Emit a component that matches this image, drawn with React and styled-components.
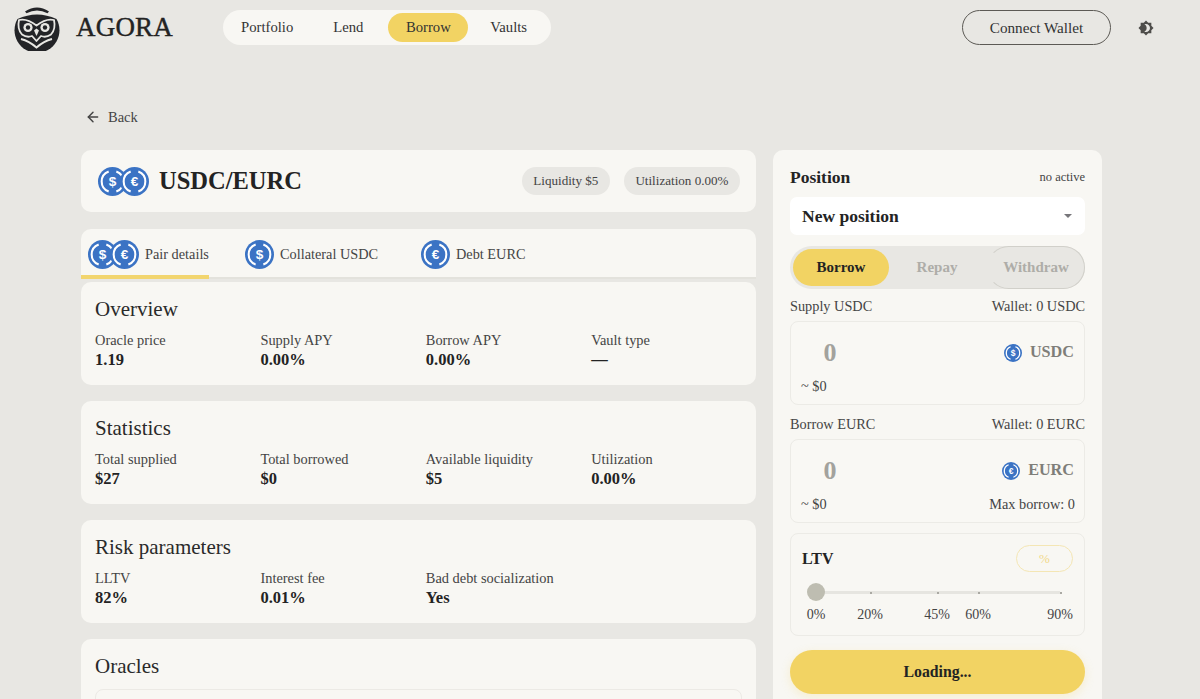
import React from 'react';
import styled, { createGlobalStyle } from 'styled-components';
import { MdBrightness4 } from 'react-icons/md';
import { ArrowLeft } from 'lucide-react';

const GlobalStyle = createGlobalStyle`
html, body {
    margin: 0;
    height: 699px;
    overflow: hidden;
    background: #e8e7e3;
    color: #232323;
    font-family: "Liberation Serif", serif;
}
* { box-sizing: border-box; }
`

const Coin = ({ symbol, size = 34 }) => (
    <CoinSvg viewBox="0 0 34 34" $size={size}>
        <circle cx="17" cy="17" r="17" fill="#3b73c4" />
        <path d="M12.5 5.2 A12.6 12.6 0 0 0 12.5 28.8" fill="none" stroke="#fff" strokeWidth="2.4" />
        <path d="M21.5 5.2 A12.6 12.6 0 0 1 21.5 28.8" fill="none" stroke="#fff" strokeWidth="2.4" />
        <text x="17" y="22.5" textAnchor="middle" fontSize="16" fontWeight="700" fill="#fff" fontFamily="Liberation Sans, sans-serif">{symbol}</text>
    </CoinSvg>
)

const PairCoins = () => (
    <PairBox>
        <Coin symbol="$" size={29} />
        <Coin symbol="€" size={29} />
    </PairBox>
)

const Owl = () => (
    <svg width="46" height="46" viewBox="0 0 46 46">
        <path d="M11 6.5 Q23 -1.5 35 6.5 L33.5 8.2 Q23 3 12.5 8.2 Z" fill="#232427" />
        <path d="M3.5 14 Q23 5 42.5 14 A22.5 22.5 0 1 1 3.5 14 Z" fill="#232427" />
        <path d="M5 15 Q13 13 22.5 20.5 Q32 13 40 15 Q42 24 37 29.5 Q32 33 27 31 L22.5 36 L18 31 Q13 33 8 29.5 Q3 24 5 15 Z" fill="#232427" stroke="#e8e7e3" strokeWidth="1.8" strokeLinejoin="round" />
        <circle cx="14" cy="22.5" r="4.6" fill="#e8e7e3" />
        <circle cx="31" cy="22.5" r="4.6" fill="#e8e7e3" />
        <circle cx="14" cy="22.5" r="2.2" fill="#232427" />
        <circle cx="31" cy="22.5" r="2.2" fill="#232427" />
        <path d="M20 25.5 L22.5 23.5 L25 25.5 L22.5 31 Z" fill="#e8e7e3" />
        <path d="M7 34 Q15 36 22.5 42.5 Q30 36 38 34" fill="none" stroke="#e8e7e3" strokeWidth="2" />
    </svg>
)

const overview = [
    ['Oracle price', '1.19'],
    ['Supply APY', '0.00%'],
    ['Borrow APY', '0.00%'],
    ['Vault type', '—'],
]
const statistics = [
    ['Total supplied', '$27'],
    ['Total borrowed', '$0'],
    ['Available liquidity', '$5'],
    ['Utilization', '0.00%'],
]
const risk = [
    ['LLTV', '82%'],
    ['Interest fee', '0.01%'],
    ['Bad debt socialization', 'Yes'],
]
const sections = [
    ['Overview', overview],
    ['Statistics', statistics],
    ['Risk parameters', risk],
]
const ticks = [
    ['0%', 0],
    ['20%', 54],
    ['45%', 121],
    ['60%', 162],
    ['90%', 244],
]

const App = () => {
    return (
        <>
            <GlobalStyle />
            <Header>
                <Brand>
                    <Owl />
                    <BrandName>AGORA</BrandName>
                </Brand>
                <Nav>
                    <NavItem>Portfolio</NavItem>
                    <NavItem>Lend</NavItem>
                    <NavItem $active>Borrow</NavItem>
                    <NavItem>Vaults</NavItem>
                </Nav>
                <WalletButton>Connect Wallet</WalletButton>
                <ThemeToggle><MdBrightness4 size={16} /></ThemeToggle>
            </Header>
            <Page>
                <BackLink><ArrowLeft size={16} strokeWidth={2.2} />Back</BackLink>
                <Columns>
                    <MainColumn>
                        <TitleCard>
                            <TitleLeft>
                                <PairCoins />
                                <PairTitle>USDC/EURC</PairTitle>
                            </TitleLeft>
                            <Badges>
                                <Badge>Liquidity $5</Badge>
                                <Badge>Utilization 0.00%</Badge>
                            </Badges>
                        </TitleCard>
                        <TabsCard>
                            <Tab $active $width={128}><PairCoins />Pair details</Tab>
                            <Tab $width={176}><Coin symbol="$" size={29} />Collateral USDC</Tab>
                            <Tab $width={140}><Coin symbol="€" size={29} />Debt EURC</Tab>
                        </TabsCard>
                        <Sections>
                            {sections.map(([title, rows]) => (
                                <InfoCard key={title}>
                                    <InfoTitle>{title}</InfoTitle>
                                    <InfoGrid>
                                        {rows.map(([label, value]) => (
                                            <div key={label}>
                                                <InfoLabel>{label}</InfoLabel>
                                                <InfoValue>{value}</InfoValue>
                                            </div>
                                        ))}
                                    </InfoGrid>
                                </InfoCard>
                            ))}
                            <InfoCard>
                                <InfoTitle>Oracles</InfoTitle>
                                <OracleBox />
                            </InfoCard>
                        </Sections>
                    </MainColumn>
                    <SidePanel>
                        <PanelHead>
                            <PanelTitle>Position</PanelTitle>
                            <PanelNote>no active</PanelNote>
                        </PanelHead>
                        <SelectBox>New position<Caret /></SelectBox>
                        <ModeTabs>
                            <ModeTab $active>Borrow</ModeTab>
                            <ModeTab>Repay</ModeTab>
                            <ModeTab $outlined>Withdraw</ModeTab>
                        </ModeTabs>
                        <FieldHead>
                            <span>Supply USDC</span>
                            <span>Wallet: 0 USDC</span>
                        </FieldHead>
                        <AmountBox>
                            <AmountRow>
                                <Amount>0</Amount>
                                <Token><Coin symbol="$" size={18} />USDC</Token>
                            </AmountRow>
                            <AmountFoot><span>~ $0</span></AmountFoot>
                        </AmountBox>
                        <FieldHead $second>
                            <span>Borrow EURC</span>
                            <span>Wallet: 0 EURC</span>
                        </FieldHead>
                        <AmountBox>
                            <AmountRow>
                                <Amount>0</Amount>
                                <Token><Coin symbol="€" size={18} />EURC</Token>
                            </AmountRow>
                            <AmountFoot><span>~ $0</span><span>Max borrow: 0</span></AmountFoot>
                        </AmountBox>
                        <LtvBox>
                            <LtvHead>
                                <LtvTitle>LTV</LtvTitle>
                                <LtvInput>%</LtvInput>
                            </LtvHead>
                            <Slider>
                                <Track />
                                <Thumb />
                                {ticks.slice(1).map(([label, left]) => (
                                    <TickDot key={label} style={{ left: left + 9 }} />
                                ))}
                            </Slider>
                            <TickRow>
                                {ticks.map(([label, left]) => (
                                    <TickLabel key={label} style={{ left: left + 9 }}>{label}</TickLabel>
                                ))}
                            </TickRow>
                        </LtvBox>
                        <SubmitButton>Loading...</SubmitButton>
                    </SidePanel>
                </Columns>
            </Page>
        </>
    );
}

const CoinSvg = styled.svg`
width: ${p => p.$size}px;
height: ${p => p.$size}px;
flex-shrink: 0;
`
const PairBox = styled.div`
display: flex;
flex-shrink: 0;
& > svg + svg { margin-left: -7px; }
`
const Header = styled.header`
height: 55px;
display: flex;
align-items: center;
padding: 0 46px 0 14px;
`
const Brand = styled.div`
display: flex;
align-items: center;
gap: 16px;
width: 209px;
`
const BrandName = styled.div`
font-size: 27px;
letter-spacing: 0.2px;
-webkit-text-stroke: 0.4px #232323;
`
const Nav = styled.nav`
width: 328px;
height: 35px;
border-radius: 18px;
background: #f8f7f3;
display: flex;
align-items: center;
gap: 4px;
`
const NavItem = styled.div`
height: 29px;
margin-left: ${p => p.$active ? '3px' : '0'};
padding: 0 ${p => p.$active ? '17.5px' : '18px'};
display: flex;
align-items: center;
border-radius: 15px;
font-size: 14.7px;
color: #333;
background: ${p => p.$active ? '#f2d363' : 'transparent'};
`
const WalletButton = styled.button`
margin-left: auto;
width: 149px;
height: 35px;
border: 1px solid #5c5a55;
border-radius: 18px;
background: transparent;
color: #333;
font-family: inherit;
font-size: 15.2px;
`
const ThemeToggle = styled.div`
margin-left: 27px;
width: 16px;
height: 16px;
line-height: 0;
color: #4e4d4a;
`
const Page = styled.main`
padding: 0 98px 0 81px;
`
const BackLink = styled.div`
height: 95px;
padding: 29px 0 0 4px;
display: flex;
align-items: center;
gap: 7px;
font-size: 14.5px;
color: #444;
`
const Columns = styled.div`
display: grid;
grid-template-columns: 675px 329px;
gap: 17px;
align-items: start;
`
const MainColumn = styled.div`
display: flex;
flex-direction: column;
`
const TitleCard = styled.section`
height: 62px;
border-radius: 10px;
background: #f8f7f3;
display: flex;
align-items: center;
justify-content: space-between;
padding: 0 16px 0 17px;
margin-bottom: 17px;
`
const TitleLeft = styled.div`
display: flex;
align-items: center;
gap: 10px;
`
const PairTitle = styled.h1`
margin: 0;
font-size: 24.5px;
font-weight: 700;
`
const Badges = styled.div`
display: flex;
gap: 14px;
`
const Badge = styled.div`
height: 28px;
padding: 0 11.5px;
border-radius: 14px;
background: #e8e7e3;
display: flex;
align-items: center;
font-size: 13.1px;
color: #444;
`
const TabsCard = styled.div`
height: 50px;
border-radius: 10px 10px 0 0;
background: #f8f7f3;
display: flex;
border-bottom: 2px solid #e3e2dc;
`
const Tab = styled.div`
width: ${p => p.$width}px;
height: 50px;
padding: 4px 0 0 7px;
display: flex;
align-items: center;
gap: 6px;
font-size: 14.3px;
color: #444;
border-bottom: 4px solid ${p => p.$active ? '#f2d56e' : 'transparent'};
white-space: nowrap;
&:nth-child(2) { padding-left: 36px; width: 212px; }
&:nth-child(3) { padding-left: 0; }
`
const Sections = styled.div`
margin-top: 3px;
display: flex;
flex-direction: column;
gap: 16px;
`
const InfoCard = styled.section`
height: 103px;
border-radius: 10px;
background: #f8f7f3;
padding: 15.3px 14px 0;
`
const InfoTitle = styled.h2`
margin: 0 0 11px;
font-size: 21px;
line-height: 24px;
font-weight: 400;
color: #2a2a2a;
`
const InfoGrid = styled.div`
display: grid;
grid-template-columns: repeat(4, 165.4px);
`
const InfoLabel = styled.div`
font-size: 14.4px;
line-height: 17px;
color: #444;
`
const InfoValue = styled.div`
font-size: 16.5px;
line-height: 21px;
font-weight: 700;
color: #232323;
`
const OracleBox = styled.div`
height: 40px;
border: 1px solid #eceae5;
border-radius: 8px;
`
const SidePanel = styled.aside`
height: 560px;
border-radius: 10px;
background: #f8f7f3;
padding: 0 17px;
`
const PanelHead = styled.div`
height: 47px;
padding-top: 7px;
display: flex;
align-items: center;
justify-content: space-between;
`
const PanelTitle = styled.div`
font-size: 17.5px;
font-weight: 700;
`
const PanelNote = styled.div`
font-size: 12.5px;
color: #444;
`
const SelectBox = styled.div`
height: 38px;
border-radius: 7px;
background: #fff;
padding: 0 13px 0 12px;
display: flex;
align-items: center;
justify-content: space-between;
font-size: 17.5px;
font-weight: 700;
`
const Caret = styled.span`
width: 0;
height: 0;
border-left: 4.5px solid transparent;
border-right: 4.5px solid transparent;
border-top: 4.5px solid #77767a;
`
const ModeTabs = styled.div`
height: 43px;
margin-top: 11px;
border-radius: 22px;
background: #e8e7e3;
display: grid;
grid-template-columns: 99px 96px 100px;
`
const ModeTab = styled.div`
display: flex;
align-items: center;
justify-content: center;
font-size: 15px;
font-weight: 700;
color: ${p => p.$active ? '#232323' : '#aeada8'};
background: ${p => p.$active ? '#f2d363' : 'transparent'};
border-radius: 19px;
margin: ${p => p.$active ? '3px 0 3px 3px' : '0'};
${p => p.$outlined && `
    margin-left: 2px;
    border: 1px solid #d1d0ca;
    border-left-color: transparent;
    border-radius: 22px;
`}
`
const FieldHead = styled.div`
margin: ${p => p.$second ? '7px' : '5px'} 0 3px;
height: 24px;
display: flex;
align-items: center;
justify-content: space-between;
font-size: 14.3px;
color: #444;
`
const AmountBox = styled.div`
height: 84px;
border: 1px solid #ecebe6;
border-radius: 8px;
padding: 0 10px;
background: #f9f8f4;
`
const AmountRow = styled.div`
height: 50px;
padding-top: 11px;
display: flex;
align-items: center;
justify-content: space-between;
`
const Amount = styled.div`
width: 58px;
text-align: center;
font-size: 26px;
font-weight: 700;
color: #a3a29d;
`
const Token = styled.div`
display: flex;
align-items: center;
gap: 8px;
font-size: 16.2px;
font-weight: 700;
color: #7f7e79;
`
const AmountFoot = styled.div`
margin: 6px -1px 0 0;
display: flex;
justify-content: space-between;
font-size: 14.3px;
color: #444;
`
const LtvBox = styled.div`
height: 103px;
margin-top: 10px;
border: 1px solid #ecebe6;
border-radius: 8px;
padding: 11px 11px 0;
`
const LtvHead = styled.div`
display: flex;
align-items: center;
justify-content: space-between;
`
const LtvTitle = styled.div`
font-size: 16px;
font-weight: 700;
`
const LtvInput = styled.div`
width: 57px;
height: 27px;
border: 1px solid #f4e6b4;
border-radius: 14px;
display: flex;
align-items: center;
justify-content: center;
font-size: 13px;
color: #f2d98a;
`
const Slider = styled.div`
position: relative;
height: 20px;
margin: 10px 0 0 5px;
width: 253px;
`
const Track = styled.div`
position: absolute;
left: 9px;
right: 0;
top: 8.5px;
height: 3px;
background: #e6e5e0;
`
const Thumb = styled.div`
position: absolute;
left: 0;
top: 1px;
width: 18px;
height: 18px;
border-radius: 50%;
background: #bebdb1;
`
const TickDot = styled.div`
position: absolute;
top: 9.5px;
width: 2px;
height: 2px;
background: #aaa9a3;
`
const TickRow = styled.div`
position: relative;
height: 18px;
margin: 5px 0 0 5px;
`
const TickLabel = styled.span`
position: absolute;
transform: translateX(-50%);
font-size: 14px;
color: #444;
`
const SubmitButton = styled.button`
width: 100%;
height: 44px;
margin-top: 14px;
border: none;
border-radius: 22px;
background: #f2d363;
box-shadow: 0 3px 10px rgba(242, 211, 99, 0.25);
color: #232323;
font-family: inherit;
font-size: 15.8px;
font-weight: 700;
`
export default App;
